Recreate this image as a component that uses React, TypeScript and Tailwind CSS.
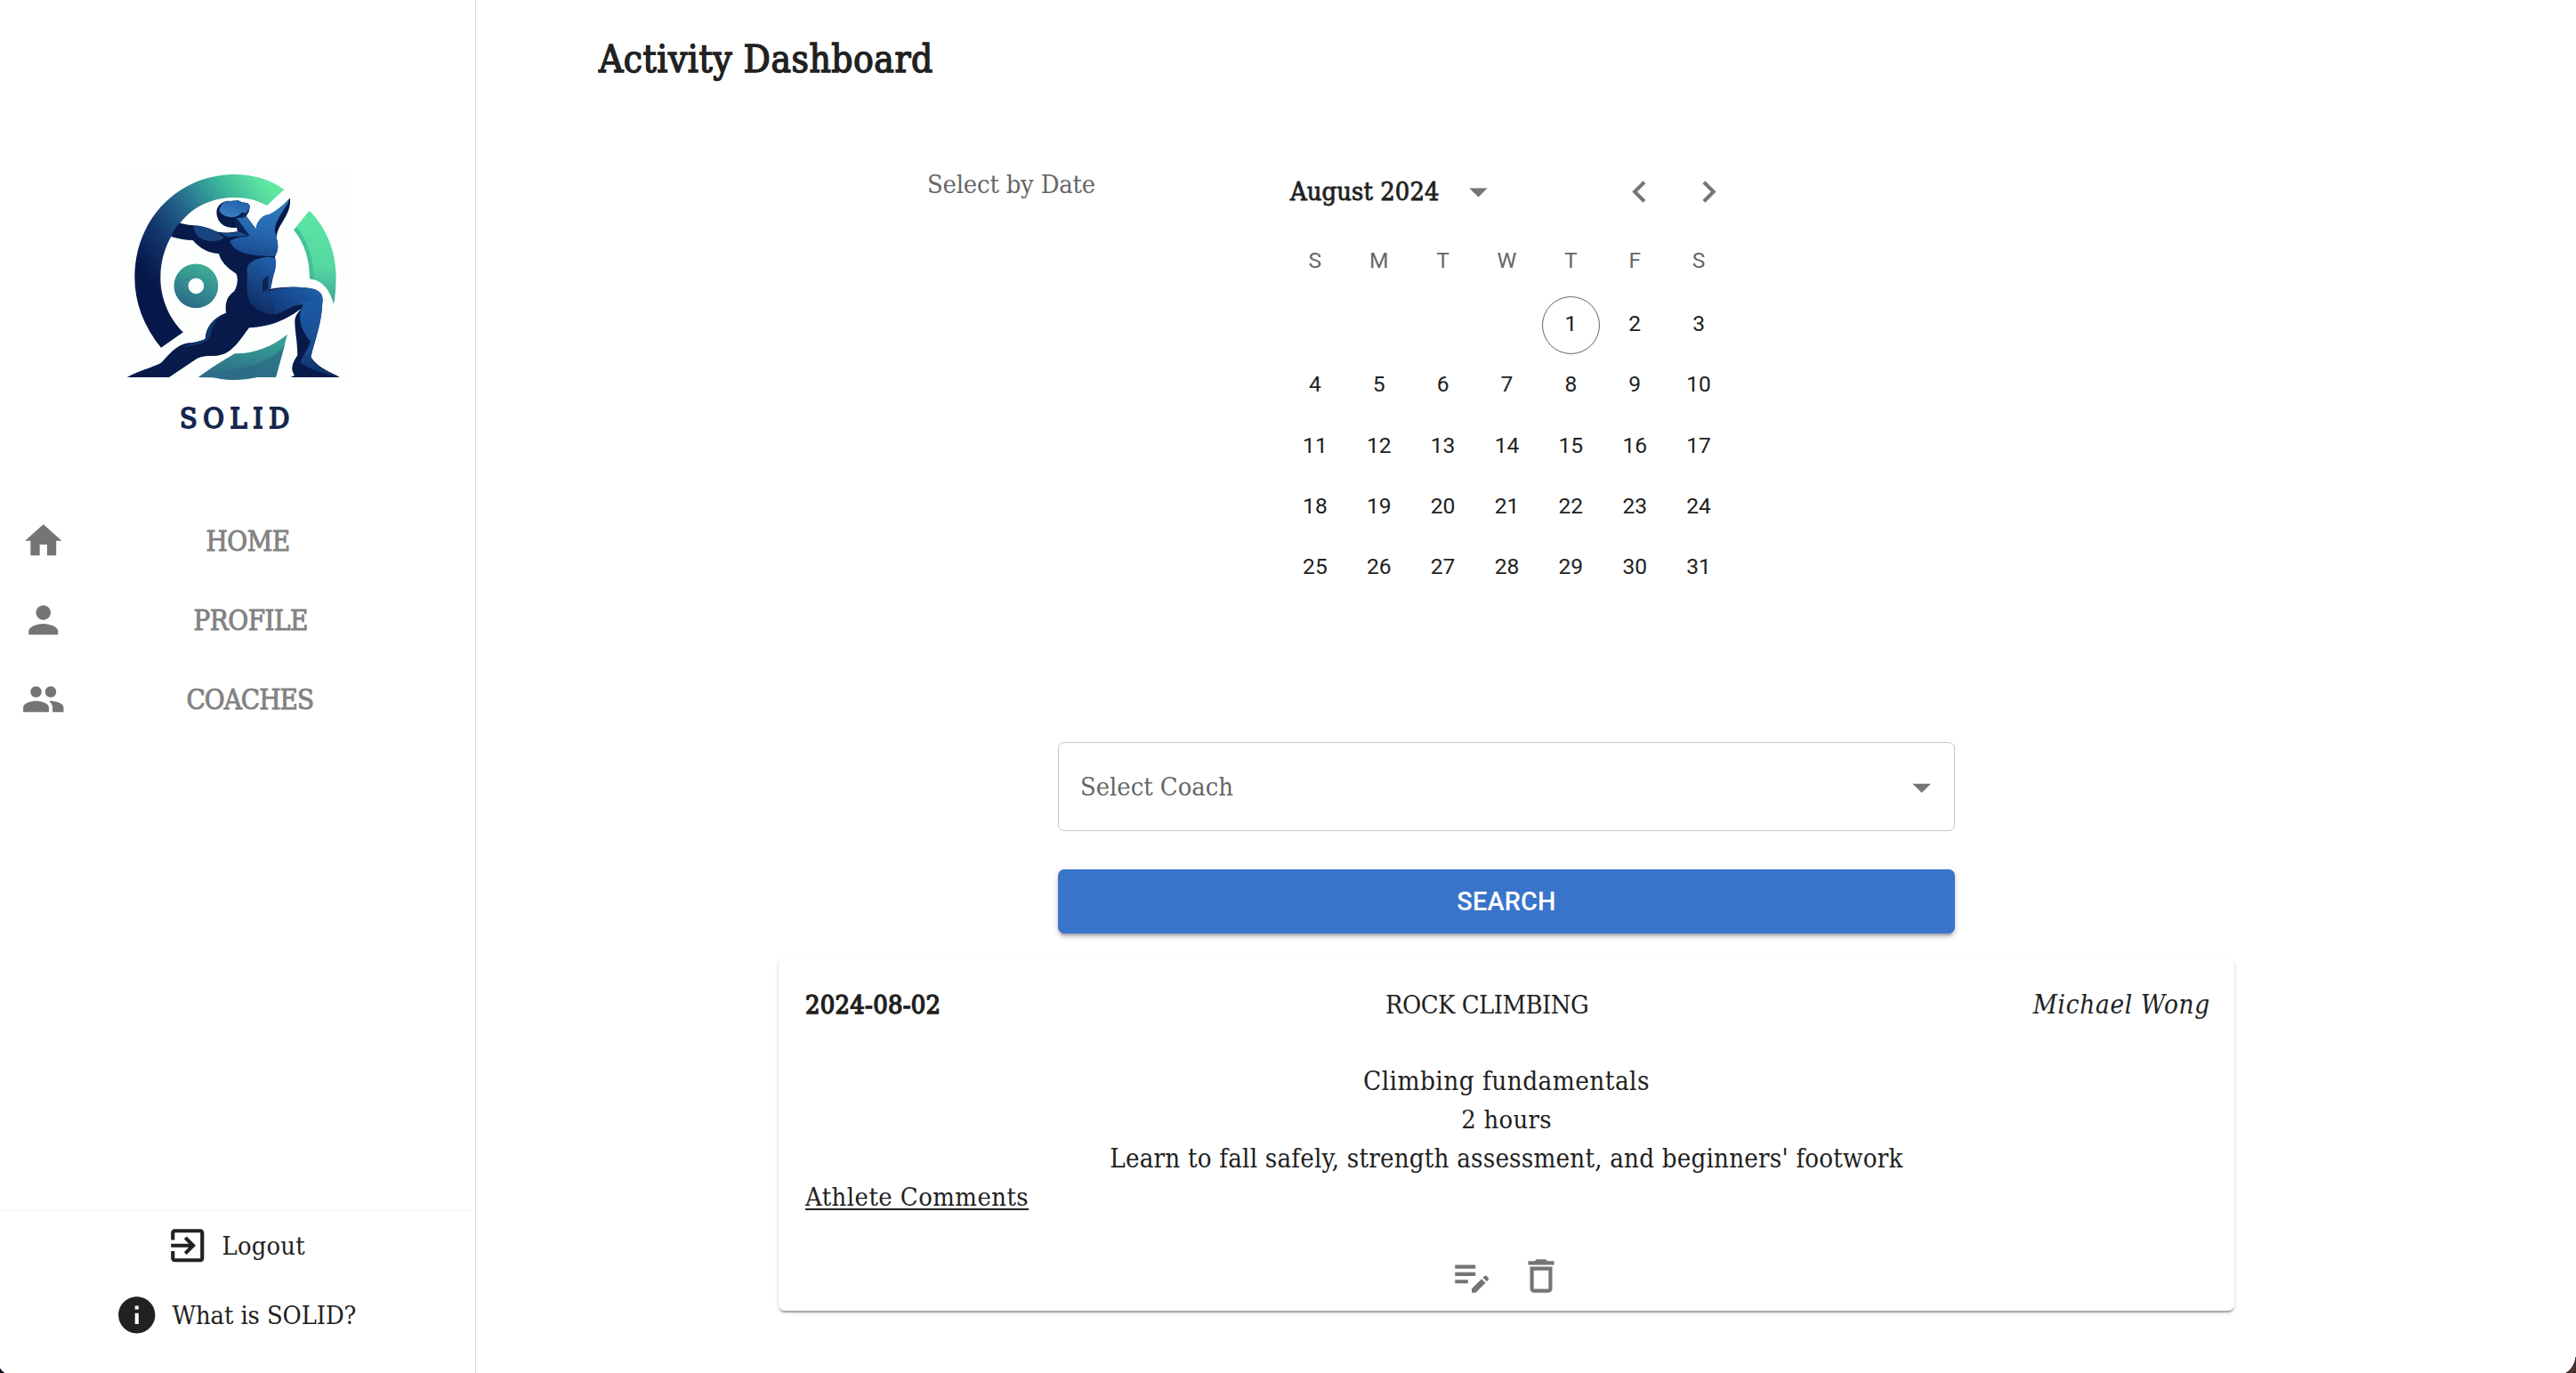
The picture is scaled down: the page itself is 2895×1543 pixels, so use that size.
import type { ReactNode } from "react";
import {
  MdArrowDropDown,
  MdChevronLeft,
  MdChevronRight,
  MdDeleteOutline,
  MdEditNote,
  MdExitToApp,
  MdHome,
  MdInfo,
  MdPeople,
  MdPerson,
} from "react-icons/md";

function Logo() {
  return (
    <svg viewBox="0 0 870 780" className="block h-[260px] w-[290px]" aria-label="SOLID logo">
      <defs>
        <linearGradient id="ring" gradientUnits="userSpaceOnUse" x1="150" y1="440" x2="560" y2="140">
          <stop offset="0" stopColor="#06184a" />
          <stop offset="0.25" stopColor="#14386f" />
          <stop offset="0.5" stopColor="#276f90" />
          <stop offset="0.75" stopColor="#3cb59a" />
          <stop offset="1" stopColor="#5fe8a2" />
        </linearGradient>
        <linearGradient id="arc" x1="0" y1="0" x2="0" y2="1">
          <stop offset="0" stopColor="#5ce5a2" />
          <stop offset="0.6" stopColor="#55d8a2" />
          <stop offset="1" stopColor="#3ba697" />
        </linearGradient>
        <linearGradient id="donut" gradientUnits="userSpaceOnUse" x1="330" y1="380" x2="270" y2="528">
          <stop offset="0" stopColor="#3fae98" />
          <stop offset="1" stopColor="#2a6a88" />
        </linearGradient>
        <linearGradient id="wedge" x1="0.7" y1="0" x2="0.4" y2="1">
          <stop offset="0" stopColor="#38a596" />
          <stop offset="1" stopColor="#2c6b86" />
        </linearGradient>
        <linearGradient id="chest" x1="0.6" y1="0" x2="0.4" y2="1">
          <stop offset="0" stopColor="#2f7cc0" />
          <stop offset="0.6" stopColor="#2465ae" />
          <stop offset="1" stopColor="#1a4a8c" />
        </linearGradient>
        <linearGradient id="abs" x1="0.7" y1="0" x2="0.4" y2="1">
          <stop offset="0" stopColor="#1f60aa" />
          <stop offset="0.5" stopColor="#184685" />
          <stop offset="1" stopColor="#0c2c63" />
        </linearGradient>
        <linearGradient id="thigh" x1="1" y1="0" x2="0" y2="0.5">
          <stop offset="0" stopColor="#1f62ae" />
          <stop offset="1" stopColor="#123c7c" />
        </linearGradient>
        <linearGradient id="shin" x1="0.3" y1="0" x2="0.3" y2="1">
          <stop offset="0" stopColor="#1c5aa6" />
          <stop offset="0.6" stopColor="#1a4c90" />
          <stop offset="1" stopColor="#0c2b62" />
        </linearGradient>
        <linearGradient id="head" x1="0.8" y1="0" x2="0.2" y2="1">
          <stop offset="0" stopColor="#1d5fa8" />
          <stop offset="1" stopColor="#3b82c4" />
        </linearGradient>
      </defs>
      <rect x="55" y="52" width="757" height="724" fill="#fdfffe" />
      <path
        fill="url(#ring)"
        d="M183 662C125 590 94 510 94 425C94 225 245 78 430 78C500 78 555 98 598 129L540 183C505 164 470 156 430 156C365 156 295 180 247 243C203 298 181 360 181 425C181 500 213 567 258 610Z"
      />
      <path fill="url(#arc)" d="M683 200C745 262 773 345 773 425C773 460 770 490 765 516C752 465 725 435 684 430C685 370 668 310 630 265Z" />
      <path fill="#3db594" opacity="0.7" d="M630 265C640 255 645 258 650 268C680 310 697 370 700 433L684 430C685 370 668 310 630 265Z" />
      <circle cx="301" cy="454" r="50.5" fill="none" stroke="url(#donut)" strokeWidth="48" />
      <path fill="url(#wedge)" d="M609 617L570 762H506Q433 779 360 763L308 762C345 735 390 706 432 682C495 683 560 658 609 617Z" />
      <path fill="#2c6b86" opacity="0.7" d="M601 652L570 762H506Q433 779 360 763L330 750C440 735 545 725 601 652Z" />
      <path
        fill="#071a4a"
        d="M217 288C224 270 232 252 247 242C265 247 280 248 293 250C330 252 350 262 375 272C400 276 425 274 441 270L438 257C398 262 371 242 370 205C371 180 395 165 415 168L443 166L455 172L475 175L483 184L478 205L470 218L503 262C505 240 520 215 550 212C575 200 600 175 618 158C620 185 612 205 600 225C590 245 575 260 572 290C580 320 578 335 567 355C573 385 568 400 560 425L552 464C600 455 660 455 700 465C725 475 730 490 727 510C725 580 700 640 688 694C710 730 755 745 785 762H620L633 755C618 735 625 715 643 688C643 640 633 600 634 570C636 552 645 545 655 530C610 565 560 590 480 595C445 640 420 692 355 690C320 690 310 695 295 705L210 762H68C120 735 160 728 185 712C215 680 240 645 290 645C310 640 325 638 332 632C335 590 360 560 402 545C398 510 405 490 430 472C443 450 443 420 435 412C410 395 385 375 378 345C350 345 315 330 290 300C265 300 240 295 217 288Z"
      />
      <path fill="#184580" d="M290 251C335 252 372 268 396 292C370 308 340 306 318 294C300 285 296 265 290 251Z" />
      <path fill="#184b8c" d="M385 275C410 280 430 274 447 270L475 284C450 288 430 286 412 290C400 286 392 282 385 275Z" />
      <path
        fill="url(#chest)"
        d="M414 304C432 288 465 290 481 284L436 224L458 224L470 218L503 262C505 240 520 215 550 212C575 200 600 175 615 164C603 195 570 225 566 265L572 290C580 320 578 335 567 355L548 354C500 352 435 350 414 304Z"
      />
      <path fill="#0a2658" d="M436 222L482 286L462 276L440 258C430 250 430 235 436 222Z" />
      <path fill="url(#head)" d="M379 200C385 175 400 167 415 168L443 166L455 172L475 175L483 184L478 205C470 212 463 206 455 206C445 226 395 230 379 200Z" />
      <path fill="#0b2d64" d="M482 188L478 205L470 219C462 225 455 222 450 218C465 214 474 205 482 188Z" />
      <path
        fill="url(#abs)"
        d="M540 356L567 360C573 385 568 400 560 425L552 464L532 474C548 500 560 520 565 550C515 548 482 525 473 480C472 450 475 420 472 398C476 372 500 362 540 356Z"
      />
      <path fill="#0a2355" d="M525 434L545 418L543 464L525 474Z" />
      <path fill="url(#thigh)" d="M532 474C600 455 660 455 700 465C725 475 730 490 727 510C705 512 685 515 665 517C620 515 600 545 565 550C562 520 548 498 532 474Z" />
      <path fill="url(#shin)" d="M663 517C640 510 665 505 727 510C725 580 700 640 688 694C710 730 755 745 785 762C735 750 675 735 652 712C660 690 680 665 687 642C650 595 647 560 655 533Z" />
      <path fill="#12356d" d="M404 546C362 560 335 590 332 632C310 645 280 644 258 662C300 652 340 650 350 620C357 580 375 560 404 546Z" />
    </svg>
  );
}

function NavItem({ icon, children, textClass }: { icon: ReactNode; children: string; textClass: string }) {
  return (
    <li className="flex h-[89px] items-center pl-[24px] text-[#757575]">
      {icon}
      <span className={`pt-[2px] text-[31px] text-[#828282] [-webkit-text-stroke:0.9px_#828282] ${textClass}`}>{children}</span>
    </li>
  );
}

const weekdays = ["S", "M", "T", "W", "T", "F", "S"];
const weeks = [
  [0, 0, 0, 0, 1, 2, 3],
  [4, 5, 6, 7, 8, 9, 10],
  [11, 12, 13, 14, 15, 16, 17],
  [18, 19, 20, 21, 22, 23, 24],
  [25, 26, 27, 28, 29, 30, 31],
];

function Calendar() {
  return (
    <div className="w-[503px]">
      <div className="flex h-[60px] items-center text-[#757575]">
        <span className="ml-[8px] w-[171px] pt-[1px] text-[28.8px] tracking-[0.1px] text-[#212121] [-webkit-text-stroke:0.8px_#212121]">
          August 2024
        </span>
        <MdArrowDropDown className="ml-[17px] size-[49px]" />
        <MdChevronLeft className="ml-[132px] size-[49px]" />
        <MdChevronRight className="ml-[29px] size-[49px]" />
      </div>
      <div className="mt-[12px] grid h-[72px] grid-cols-7 items-center text-center font-['Roboto'] text-[24.6px] text-[#666666]">
        {weekdays.map((d, i) => (
          <span key={i}>{d}</span>
        ))}
      </div>
      <div className="mt-[2px] mb-[1px] font-['Roboto'] text-[24.6px] text-[#212121]">
        {weeks.map((week, i) => (
          <div key={i} className="grid h-[68.3px] grid-cols-7 place-items-center">
            {week.map((day, j) => (
              <span
                key={j}
                className={`flex size-[65px] items-center justify-center rounded-full pb-[1px] ${day === 1 ? "border border-[#666666]" : ""}`}
              >
                {day || ""}
              </span>
            ))}
          </div>
        ))}
      </div>
    </div>
  );
}

export default function App() {
  return (
    <div className="relative flex h-[1543px] w-[2895px] overflow-hidden bg-white font-['DejaVu_Serif_Condensed','DejaVu_Serif',serif] text-[28.8px] whitespace-nowrap text-[#212121]">
      <aside className="flex w-[535px] shrink-0 flex-col border-r border-[#d9d9d9]">
        <div className="mt-[170px] ml-[120px] w-[290px]">
          <Logo />
          <p className="h-[80px] pl-[82px] text-[32px] leading-[81px] tracking-[6.6px] text-[#14274d] [-webkit-text-stroke:1.800px_#14274d]">
            SOLID
          </p>
        </div>
        <ul className="mt-[53px]">
          <NavItem icon={<MdHome className="size-[49.5px]" />} textClass="ml-[158px] tracking-[-0.5px]">HOME</NavItem>
          <NavItem icon={<MdPerson className="size-[49.5px]" />} textClass="ml-[144px] tracking-[-0.5px]">PROFILE</NavItem>
          <NavItem icon={<MdPeople className="size-[49.5px]" />} textClass="ml-[136px] tracking-[-1px]">COACHES</NavItem>
        </ul>
        <div className="mt-auto h-[183px] border-t border-[#f3f3f3]">
          <div className="flex h-[78px] items-center pl-[186px]">
            <MdExitToApp className="size-[49.5px]" />
            <span className="ml-[14px] pt-[2px] tracking-[0.2px]">Logout</span>
          </div>
          <div className="flex h-[78px] items-center pl-[129px]">
            <MdInfo className="size-[49.5px]" />
            <span className="ml-[15px] pt-[2px] tracking-[-0.1px]">What is SOLID?</span>
          </div>
        </div>
      </aside>

      <main className="flex-1">
        <h1 className="ml-[138px] h-[133px] text-[42px] leading-[134px] tracking-[0.55px] [-webkit-text-stroke:1.400px_#212121]">
          Activity Dashboard
        </h1>
        <div className="mt-[52px] ml-[507px] flex items-start">
          <span className="w-[400px] leading-[44px] tracking-[-0.16px] text-[#666666]">Select by Date</span>
          <Calendar />
        </div>

        <div className="mt-[161px] ml-[654px] w-[1008px]">
          <div className="flex h-[100px] items-center justify-between rounded-[7px] border border-[#c4c4c4] pr-[12px] pl-[24px]">
            <span className="text-[#666666]">Select Coach</span>
            <MdArrowDropDown className="size-[49.5px] text-[#757575]" />
          </div>
          <button className="mt-[43px] block h-[72px] w-full rounded-[7px] bg-[#3974cb] font-['Roboto'] text-[28.8px] font-medium tracking-[0.2px] text-white shadow-[0_5px_2px_-3px_rgba(0,0,0,0.2),0_4px_4px_0_rgba(0,0,0,0.14),0_2px_9px_0_rgba(0,0,0,0.12)]">
            SEARCH
          </button>
        </div>

        <article className="mt-[28px] ml-[340px] h-[396px] w-[1636px] rounded-[7px] bg-white px-[30px] pt-[31px] leading-[43.4px] shadow-[0_4px_2px_-2px_rgba(0,0,0,0.2),0_2px_2px_0_rgba(0,0,0,0.14),0_2px_5px_0_rgba(0,0,0,0.12)]">
          <header className="flex justify-between">
            <span className="tracking-[0.3px] [-webkit-text-stroke:1.400px_#212121]">2024-08-02</span>
            <span className="tracking-[-0.5px]">ROCK CLIMBING</span>
            <em className="mr-[-3px] text-[29.5px] tracking-[0.65px]">Michael Wong</em>
          </header>
          <div className="mt-[42px] text-center">
            <p className="text-[29.400px] tracking-[0.45px]">Climbing fundamentals</p>
            <p className="tracking-[0.3px]">2 hours</p>
            <p className="text-[29.200px] tracking-[0.200px]">Learn to fall safely, strength assessment, and beginners' footwork</p>
          </div>
          <p>
            <span className="tracking-[0.5px] underline decoration-2 underline-offset-[3px]">Athlete Comments</span>
          </p>
          <footer className="mt-[41px] flex justify-center gap-[28.5px] text-[#757575]">
            <MdEditNote className="size-[50px]" />
            <MdDeleteOutline className="size-[50px]" />
          </footer>
        </article>
      </main>

      <svg className="absolute bottom-0 left-0 size-[6px]" viewBox="0 0 6 6">
        <path d="M0 0.500Q2 4 5.500 6H0Z" fill="#120818" />
      </svg>
      <svg className="absolute right-0 bottom-0 h-[20px] w-[12px]" viewBox="0 0 12 20">
        <path d="M12 2C11 10 7 16 1 20H12Z" fill="#55342f" stroke="#222222" strokeWidth="1" />
      </svg>
    </div>
  );
}
